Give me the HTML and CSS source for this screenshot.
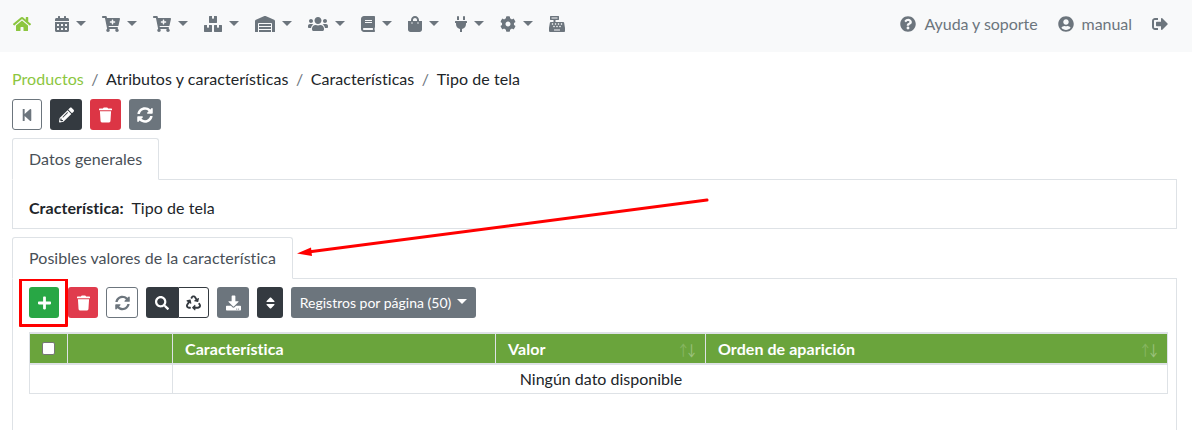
FILE: index.html
```html
<!DOCTYPE html>
<html lang="es">
<head>
<meta charset="utf-8">
<title>Tipo de tela</title>
<link rel="stylesheet" href="styles.css">
</head>
<body>
<svg class="defs" width="0" height="0" aria-hidden="true">
<symbol id="i-plus" viewBox="0 0 448 512"><path d="M416 208H272V64c0-17.67-14.33-32-32-32h-32c-17.67 0-32 14.33-32 32v144H32c-17.67 0-32 14.33-32 32v32c0 17.67 14.33 32 32 32h144v144c0 17.67 14.33 32 32 32h32c17.67 0 32-14.33 32-32V304h144c17.67 0 32-14.33 32-32v-32c0-17.67-14.33-32-32-32z"/></symbol>
<symbol id="i-search" viewBox="0 0 512 512"><path d="M505 442.7L405.3 343c-4.5-4.5-10.6-7-17-7H372c27.6-35.3 44-79.7 44-128C416 93.1 322.9 0 208 0S0 93.1 0 208s93.1 208 208 208c48.3 0 92.7-16.4 128-44v16.3c0 6.4 2.5 12.5 7 17l99.7 99.7c9.4 9.4 24.6 9.4 33.9 0l28.3-28.3c9.4-9.4 9.4-24.6.1-34zM208 336c-70.7 0-128-57.2-128-128 0-70.7 57.2-128 128-128 70.7 0 128 57.2 128 128 0 70.7-57.2 128-128 128z"/></symbol>
<symbol id="i-trash" viewBox="0 0 448 512"><path d="M432 32H312l-9.4-18.7A24 24 0 0 0 281.1 0H166.8a23.72 23.72 0 0 0-21.4 13.3L136 32H16A16 16 0 0 0 0 48v32a16 16 0 0 0 16 16h416a16 16 0 0 0 16-16V48a16 16 0 0 0-16-16zM53.2 467a48 48 0 0 0 47.9 45h245.8a48 48 0 0 0 47.9-45L416 128H32z"/></symbol>
<symbol id="i-sort" viewBox="0 0 320 512"><path d="M41 288h238c21.4 0 32.1 25.9 17 41L177 448c-9.4 9.4-24.6 9.4-33.9 0L24 329c-15.1-15.1-4.4-41 17-41zm255-105L177 64c-9.4-9.4-24.6-9.4-33.9 0L24 183c-15.1 15.1-4.4 41 17 41h238c21.4 0 32.1-25.9 17-41z"/></symbol>
<symbol id="i-back" viewBox="0 0 448 512"><path d="M64 468V44c0-6.6 5.4-12 12-12h48c6.6 0 12 5.4 12 12v176.4l195.5-181C352 20.6 384 34.9 384 64v384c0 29.1-32 43.4-52.5 24.5L136 292.7V468c0 6.6-5.4 12-12 12H76c-6.6 0-12-5.4-12-12z"/></symbol>
<symbol id="i-pencil" viewBox="0 0 512 512"><path d="M497.9 142.1l-46.1 46.1c-4.7 4.7-12.3 4.7-17 0l-111-111c-4.7-4.7-4.7-12.3 0-17l46.1-46.1c18.7-18.7 49.1-18.7 67.9 0l60.1 60.1c18.8 18.7 18.8 49.1 0 67.9zM284.2 99.8L21.6 362.4.4 483.9c-2.9 16.4 11.4 30.6 27.8 27.8l121.5-21.3 262.6-262.6c4.7-4.7 4.7-12.3 0-17l-111-111c-4.8-4.7-12.4-4.7-17.1 0zM124.1 339.9c-5.5-5.5-5.5-14.3 0-19.8l154-154c5.5-5.5 14.3-5.5 19.8 0s5.5 14.3 0 19.8l-154 154c-5.5 5.5-14.3 5.5-19.8 0zM88 424h48v36.3l-64.5 11.3-31.1-31.1L51.7 376H88v48z"/></symbol>
<symbol id="i-sync" viewBox="0 0 512 512"><path d="M370.72 133.28C339.458 104.008 298.888 87.962 255.848 88c-77.458.068-144.328 53.178-162.791 126.85-1.344 5.363-6.122 9.15-11.651 9.15H24.103c-7.498 0-13.194-6.807-11.807-14.176C33.933 94.924 134.813 8 256 8c66.448 0 126.791 26.136 171.315 68.685L463.03 40.97C478.149 25.851 504 36.559 504 57.941V192c0 13.255-10.745 24-24 24H345.941c-21.382 0-32.09-25.851-16.971-40.971l41.75-41.749zM32 296h134.059c21.382 0 32.09 25.851 16.971 40.971l-41.75 41.75c31.262 29.273 71.835 45.319 114.876 45.28 77.418-.07 144.315-53.144 162.787-126.849 1.344-5.363 6.122-9.15 11.651-9.15h57.304c7.498 0 13.194 6.807 11.807 14.176C478.067 417.076 377.187 504 256 504c-66.448 0-126.791-26.136-171.315-68.685L48.97 471.03C33.851 486.149 8 475.441 8 454.059V320c0-13.255 10.745-24 24-24z"/></symbol>
<symbol id="i-home" viewBox="0 0 576 512"><path d="M280.37 148.26L96 300.11V464a16 16 0 0 0 16 16l112.06-.29a16 16 0 0 0 15.92-16V368a16 16 0 0 1 16-16h64a16 16 0 0 1 16 16v95.64a16 16 0 0 0 16 16.05L464 480a16 16 0 0 0 16-16V300L295.67 148.26a12.19 12.19 0 0 0-15.3 0zM571.6 251.47L488 182.56V44.05a12 12 0 0 0-12-12h-56a12 12 0 0 0-12 12v72.61L318.47 43a48 48 0 0 0-61 0L4.34 251.47a12 12 0 0 0-1.6 16.9l25.5 31A12 12 0 0 0 45.15 301l235.22-193.74a12.19 12.19 0 0 1 15.3 0L530.9 301a12 12 0 0 0 16.9-1.6l25.5-31a12 12 0 0 0-1.7-16.93z"/></symbol>
<symbol id="i-cart" viewBox="0 0 576 512"><path d="M504.717 320H211.572l6.545 32h268.418c15.401 0 26.816 14.301 23.403 29.319l-5.517 24.276C523.112 414.668 536 433.828 536 456c0 31.202-25.519 56.444-56.824 55.994-29.823-.429-54.35-24.631-55.155-54.447-.44-16.287 6.085-31.049 16.803-41.548H231.176C241.553 426.165 248 440.326 248 456c0 31.813-26.528 57.431-58.67 55.938-28.54-1.325-51.751-24.385-53.251-52.917-1.158-22.034 10.436-41.455 28.051-51.586L93.883 64H24C10.745 64 0 53.255 0 40V24C0 10.745 10.745 0 24 0h102.529c11.401 0 21.228 8.021 23.513 19.19L159.208 64H551.99c15.401 0 26.816 14.301 23.403 29.319l-47.273 208C525.637 312.246 515.923 320 504.717 320zM408 168h-48v-40c0-8.837-7.163-16-16-16h-16c-8.837 0-16 7.163-16 16v40h-48c-8.837 0-16 7.163-16 16v16c0 8.837 7.163 16 16 16h48v40c0 8.837 7.163 16 16 16h16c8.837 0 16-7.163 16-16v-40h48c8.837 0 16-7.163 16-16v-16c0-8.837-7.163-16-16-16z"/></symbol>
<symbol id="i-calendar" viewBox="0 0 448 512"><path d="M0 464c0 26.5 21.5 48 48 48h352c26.5 0 48-21.5 48-48V192H0v272zm320-196c0-6.6 5.4-12 12-12h40c6.6 0 12 5.4 12 12v40c0 6.6-5.4 12-12 12h-40c-6.6 0-12-5.4-12-12v-40zm0 128c0-6.6 5.4-12 12-12h40c6.6 0 12 5.4 12 12v40c0 6.6-5.4 12-12 12h-40c-6.6 0-12-5.4-12-12v-40zM192 268c0-6.6 5.4-12 12-12h40c6.6 0 12 5.4 12 12v40c0 6.6-5.4 12-12 12h-40c-6.6 0-12-5.4-12-12v-40zm0 128c0-6.6 5.4-12 12-12h40c6.6 0 12 5.4 12 12v40c0 6.6-5.4 12-12 12h-40c-6.6 0-12-5.4-12-12v-40zM64 268c0-6.6 5.4-12 12-12h40c6.6 0 12 5.4 12 12v40c0 6.6-5.4 12-12 12H76c-6.6 0-12-5.4-12-12v-40zm0 128c0-6.6 5.4-12 12-12h40c6.6 0 12 5.4 12 12v40c0 6.6-5.4 12-12 12H76c-6.6 0-12-5.4-12-12v-40zM400 64h-48V16c0-8.8-7.2-16-16-16h-32c-8.8 0-16 7.2-16 16v48H160V16c0-8.8-7.2-16-16-16h-32c-8.8 0-16 7.2-16 16v48H48C21.5 64 0 85.5 0 112v48h448v-48c0-26.5-21.5-48-48-48z"/></symbol>
<symbol id="i-boxes" viewBox="0 0 576 512"><path d="M560 288h-80v96l-32-21.3-32 21.3v-96h-80c-8.8 0-16 7.2-16 16v192c0 8.8 7.2 16 16 16h224c8.8 0 16-7.2 16-16V304c0-8.8-7.2-16-16-16zm-384-64h224c8.8 0 16-7.2 16-16V16c0-8.8-7.2-16-16-16h-80v96l-32-21.3L256 96V0h-80c-8.8 0-16 7.2-16 16v192c0 8.8 7.2 16 16 16zm64 64h-80v96l-32-21.3L96 384v-96H16c-8.8 0-16 7.2-16 16v192c0 8.8 7.2 16 16 16h224c8.8 0 16-7.2 16-16V304c0-8.8-7.2-16-16-16z"/></symbol>
<symbol id="i-warehouse" viewBox="0 0 640 512"><path d="M504 352H136.4c-4.4 0-8 3.6-8 8l-.1 48c0 4.4 3.6 8 8 8H504c4.4 0 8-3.6 8-8v-48c0-4.4-3.6-8-8-8zm0 96H136.1c-4.4 0-8 3.6-8 8l-.1 48c0 4.4 3.6 8 8 8h368c4.4 0 8-3.6 8-8v-48c0-4.4-3.6-8-8-8zm0-192H136.6c-4.4 0-8 3.6-8 8l-.1 48c0 4.4 3.6 8 8 8H504c4.4 0 8-3.6 8-8v-48c0-4.4-3.6-8-8-8zm106.5-139L338.4 3.7a48.15 48.15 0 0 0-36.9 0L29.5 117C11.7 124.5 0 141.9 0 161.3V504c0 4.4 3.6 8 8 8h80c4.4 0 8-3.6 8-8V256c0-17.6 14.6-32 32.6-32h382.8c18 0 32.6 14.4 32.6 32v248c0 4.4 3.6 8 8 8h80c4.4 0 8-3.6 8-8V161.3c0-19.4-11.7-36.8-29.5-44.3z"/></symbol>
<symbol id="i-users" viewBox="0 0 640 512"><path d="M96 224c35.3 0 64-28.7 64-64s-28.7-64-64-64-64 28.7-64 64 28.7 64 64 64zm448 0c35.3 0 64-28.7 64-64s-28.7-64-64-64-64 28.7-64 64 28.7 64 64 64zm32 32h-64c-17.6 0-33.5 7.1-45.1 18.6 40.3 22.1 68.9 62 75.1 109.4h66c17.7 0 32-14.3 32-32v-32c0-35.3-28.7-64-64-64zm-256 0c61.9 0 112-50.1 112-112S381.9 32 320 32 208 82.1 208 144s50.1 112 112 112zm76.8 32h-8.3c-20.8 10-43.9 16-68.5 16s-47.6-6-68.5-16h-8.3C179.6 288 128 339.6 128 403.2V432c0 26.5 21.5 48 48 48h288c26.5 0 48-21.5 48-48v-28.8c0-63.6-51.6-115.2-115.2-115.2zm-223.7-13.4C161.5 263.1 145.6 256 128 256H64c-35.3 0-64 28.7-64 64v32c0 17.7 14.3 32 32 32h65.9c6.3-47.4 34.9-87.3 75.2-109.4z"/></symbol>
<symbol id="i-book" viewBox="0 0 448 512"><path d="M448 360V24c0-13.3-10.7-24-24-24H96C43 0 0 43 0 96v320c0 53 43 96 96 96h328c13.3 0 24-10.7 24-24v-16c0-7.5-3.5-14.3-8.9-18.7-4.2-15.4-4.2-59.3 0-74.7 5.4-4.3 8.9-11.1 8.9-18.6zM128 134c0-3.3 2.7-6 6-6h212c3.3 0 6 2.7 6 6v20c0 3.3-2.7 6-6 6H134c-3.3 0-6-2.7-6-6v-20zm0 64c0-3.3 2.7-6 6-6h212c3.3 0 6 2.7 6 6v20c0 3.3-2.7 6-6 6H134c-3.3 0-6-2.7-6-6v-20zm253.4 250H96c-17.7 0-32-14.3-32-32 0-17.6 14.4-32 32-32h285.4c-1.9 17.1-1.9 46.9 0 64z"/></symbol>
<symbol id="i-bag" viewBox="0 0 448 512"><path d="M352 160v-32C352 57.42 294.579 0 224 0 153.42 0 96 57.42 96 128v32H0v272c0 44.183 35.817 80 80 80h288c44.183 0 80-35.817 80-80V160h-96zm-192-32c0-35.29 28.71-64 64-64s64 28.71 64 64v32H160v-32zm160 120c-13.255 0-24-10.745-24-24s10.745-24 24-24 24 10.745 24 24-10.745 24-24 24zm-192 0c-13.255 0-24-10.745-24-24s10.745-24 24-24 24 10.745 24 24-10.745 24-24 24z"/></symbol>
<symbol id="i-plug" viewBox="0 0 384 512"><path d="M320,32a32,32,0,0,0-64,0v96h64Zm48,128H16A16,16,0,0,0,0,176v32a16,16,0,0,0,16,16H32v32A160.07,160.07,0,0,0,160,412.8V512h64V412.8A160.07,160.07,0,0,0,352,256V224h16a16,16,0,0,0,16-16V176A16,16,0,0,0,368,160ZM128,32a32,32,0,0,0-64,0v96h64Z"/></symbol>
<symbol id="i-cog" viewBox="0 0 512 512"><path d="M487.4 315.7l-42.6-24.6c4.3-23.2 4.3-47 0-70.2l42.6-24.6c4.9-2.8 7.1-8.6 5.5-14-11.1-35.6-30-67.8-54.7-94.6-3.8-4.1-10-5.1-14.8-2.3L380.8 110c-17.9-15.4-38.5-27.3-60.8-35.1V25.8c0-5.6-3.9-10.5-9.4-11.7-36.7-8.2-74.3-7.8-109.2 0-5.5 1.2-9.4 6.1-9.4 11.7V75c-22.2 7.9-42.8 19.8-60.8 35.1L88.7 85.5c-4.9-2.8-11-1.9-14.8 2.3-24.7 26.7-43.6 58.9-54.7 94.6-1.7 5.4.6 11.2 5.5 14L67.3 221c-4.3 23.2-4.3 47 0 70.2l-42.6 24.6c-4.9 2.8-7.1 8.6-5.5 14 11.1 35.6 30 67.8 54.7 94.6 3.8 4.1 10 5.1 14.8 2.3l42.6-24.6c17.9 15.4 38.5 27.3 60.8 35.1v49.2c0 5.6 3.9 10.5 9.4 11.7 36.7 8.2 74.3 7.8 109.2 0 5.5-1.2 9.4-6.1 9.4-11.7v-49.2c22.2-7.9 42.8-19.8 60.8-35.1l42.6 24.6c4.9 2.8 11 1.9 14.8-2.3 24.7-26.7 43.6-58.9 54.7-94.6 1.5-5.5-.7-11.3-5.6-14.1zM256 336c-44.1 0-80-35.9-80-80s35.9-80 80-80 80 35.9 80 80-35.9 80-80 80z"/></symbol>
<symbol id="i-cash" viewBox="0 0 512 512"><path d="M511.1 378.8l-26.7-160c-2.6-15.4-15.9-26.7-31.6-26.7H208v-64h96c8.8 0 16-7.2 16-16V16c0-8.8-7.2-16-16-16H48c-8.8 0-16 7.2-16 16v96c0 8.8 7.2 16 16 16h96v64H59.1c-15.6 0-29 11.3-31.6 26.7L.8 378.7c-.6 3.5-.9 7-.9 10.5V480c0 17.7 14.3 32 32 32h448c17.7 0 32-14.3 32-32v-90.7c.1-3.5-.2-7-.8-10.5zM280 248c0-8.8 7.2-16 16-16h16c8.8 0 16 7.2 16 16v16c0 8.8-7.2 16-16 16h-16c-8.8 0-16-7.2-16-16v-16zm-32 64h16c8.8 0 16 7.2 16 16v16c0 8.8-7.2 16-16 16h-16c-8.8 0-16-7.2-16-16v-16c0-8.8 7.2-16 16-16zm-32-80c8.8 0 16 7.2 16 16v16c0 8.8-7.2 16-16 16h-16c-8.8 0-16-7.2-16-16v-16c0-8.8 7.2-16 16-16h16zM80 80V48h192v32H80zm40 200h-16c-8.8 0-16-7.2-16-16v-16c0-8.8 7.2-16 16-16h16c8.8 0 16 7.2 16 16v16c0 8.8-7.2 16-16 16zm16 64v-16c0-8.8 7.2-16 16-16h16c8.8 0 16 7.2 16 16v16c0 8.8-7.2 16-16 16h-16c-8.8 0-16-7.2-16-16zm216 112c0 4.4-3.6 8-8 8H168c-4.4 0-8-3.6-8-8v-16c0-4.4 3.6-8 8-8h176c4.4 0 8 3.6 8 8v16zm24-112c0 8.8-7.2 16-16 16h-16c-8.8 0-16-7.2-16-16v-16c0-8.8 7.2-16 16-16h16c8.8 0 16 7.2 16 16v16zm48-80c0 8.8-7.2 16-16 16h-16c-8.8 0-16-7.2-16-16v-16c0-8.8 7.2-16 16-16h16c8.8 0 16 7.2 16 16v16z"/></symbol>
<symbol id="i-question" viewBox="0 0 512 512"><path d="M504 256c0 136.997-111.043 248-248 248S8 392.997 8 256C8 119.083 119.043 8 256 8s248 111.083 248 248zM262.655 90c-54.497 0-89.255 22.957-116.549 63.758-3.536 5.286-2.353 12.415 2.715 16.258l34.699 26.31c5.205 3.947 12.621 3.008 16.665-2.122 17.864-22.658 30.113-35.797 57.303-35.797 20.429 0 45.698 13.148 45.698 32.958 0 14.976-12.363 22.667-32.534 33.976C247.128 238.528 216 254.941 216 296v4c0 6.627 5.373 12 12 12h56c6.627 0 12-5.373 12-12v-1.333c0-28.462 83.186-29.647 83.186-106.667 0-58.002-60.165-102-116.531-102zM256 338c-25.365 0-46 20.635-46 46 0 25.364 20.635 46 46 46s46-20.636 46-46c0-25.365-20.635-46-46-46z"/></symbol>
<symbol id="i-user" viewBox="0 0 496 512"><path d="M248 8C111 8 0 119 0 256s111 248 248 248 248-111 248-248S385 8 248 8zm0 96c48.6 0 88 39.4 88 88s-39.4 88-88 88-88-39.4-88-88 39.4-88 88-88zm0 344c-58.7 0-111.3-26.6-146.5-68.2 18.8-35.4 55.6-59.8 98.5-59.8 2.4 0 4.8.4 7.1 1.1 13 4.2 26.6 6.9 40.9 6.9 14.3 0 28-2.7 40.9-6.9 2.3-.7 4.7-1.1 7.1-1.1 42.9 0 79.7 24.4 98.5 59.8C359.3 421.4 306.7 448 248 448z"/></symbol>
<symbol id="i-signout" viewBox="0 0 512 512"><path d="M497 273L329 441c-15 15-41 4.5-41-17v-96H152c-13.3 0-24-10.7-24-24v-96c0-13.3 10.7-24 24-24h136V88c0-21.4 25.9-32 41-17l168 168c9.3 9.4 9.3 24.6 0 34zM192 436v-40c0-6.6-5.4-12-12-12H96c-17.7 0-32-14.3-32-32V160c0-17.7 14.3-32 32-32h84c6.6 0 12-5.4 12-12V76c0-6.6-5.4-12-12-12H96c-53 0-96 43-96 96v192c0 53 43 96 96 96h84c6.6 0 12-5.4 12-12z"/></symbol>
<symbol id="i-recycle" viewBox="0 0 512 512"><path d="M184.561 261.903c3.232 13.997-12.123 24.635-24.068 17.168l-40.736-25.455-50.867 81.402C55.606 356.273 70.96 384 96.012 384H148c8.837 0 16 7.163 16 16v32c0 8.837-7.163 16-16 16H96.115c-75.334 0-121.302-83.048-81.408-146.88l50.822-81.388-40.725-25.448c-12.081-7.547-8.966-25.961 4.879-29.158l110.237-25.45c8.611-1.988 17.201 3.381 19.189 11.99l25.452 110.237zm98.561-182.915l41.289 66.076-40.74 25.457c-12.051 7.528-9 25.953 4.879 29.158l110.237 25.45c8.672 1.999 17.215-3.438 19.189-11.99l25.45-110.237c3.197-13.844-11.99-24.719-24.068-17.168l-40.687 25.424-41.263-66.082c-37.521-60.033-125.209-60.171-162.816 0l-17.963 28.766c-4.667 7.49-2.372 17.357 5.134 22.042l27.117 16.954c7.498 4.686 17.367 2.405 22.053-5.09l17.97-28.743c12.434-19.883 41.464-20.04 54.214-.617zM497.288 301.12l-27.603-44.192c-4.671-7.475-14.524-9.748-21.999-5.077l-27.135 16.954c-7.494 4.682-9.771 14.553-5.09 22.047l27.661 44.28c13.352 21.341-2.017 48.867-27.19 48.867H320v-48c0-14.214-17.249-21.378-27.313-11.313l-80 80c-6.249 6.248-6.249 16.379 0 22.627l80 80C302.749 516.375 320 509.212 320 495.999V448h95.962c75.26 0 121.244-82.926 81.326-146.88z"/></symbol>
<symbol id="i-download" viewBox="0 0 512 512"><path d="M216 0h80c13.3 0 24 10.7 24 24v168h87.7c17.8 0 26.7 21.5 14.1 34.1L269.7 378.3c-7.5 7.5-19.8 7.5-27.3 0L90.1 226.1c-12.6-12.6-3.7-34.1 14.1-34.1H192V24c0-13.3 10.7-24 24-24zm296 376v112c0 13.3-10.7 24-24 24H24c-13.3 0-24-10.7-24-24V376c0-13.3 10.7-24 24-24h146.7l49 49c20.1 20.1 52.5 20.1 72.6 0l49-49H488c13.3 0 24 10.7 24 24zm-124 88c0-11-9-20-20-20s-20 9-20 20 9 20 20 20 20-9 20-20zm64 0c0-11-9-20-20-20s-20 9-20 20 9 20 20 20 20-9 20-20z"/></symbol>
</svg>

<nav class="navbar">
  <div class="nav-left">
    <a class="nav-item nav-home"><svg class="icon w18 green"><use href="#i-home"/></svg></a>
    <a class="nav-item"><svg class="icon w14"><use href="#i-calendar"/></svg><span class="caret"></span></a>
    <a class="nav-item"><svg class="icon w18"><use href="#i-cart"/></svg><span class="caret"></span></a>
    <a class="nav-item"><svg class="icon w18"><use href="#i-cart"/></svg><span class="caret"></span></a>
    <a class="nav-item"><svg class="icon w18"><use href="#i-boxes"/></svg><span class="caret"></span></a>
    <a class="nav-item"><svg class="icon w20"><use href="#i-warehouse"/></svg><span class="caret"></span></a>
    <a class="nav-item"><svg class="icon w20"><use href="#i-users"/></svg><span class="caret"></span></a>
    <a class="nav-item"><svg class="icon w14"><use href="#i-book"/></svg><span class="caret"></span></a>
    <a class="nav-item"><svg class="icon w14"><use href="#i-bag"/></svg><span class="caret"></span></a>
    <a class="nav-item"><svg class="icon w12"><use href="#i-plug"/></svg><span class="caret"></span></a>
    <a class="nav-item"><svg class="icon w16"><use href="#i-cog"/></svg><span class="caret"></span></a>
    <a class="nav-item"><svg class="icon w16"><use href="#i-cash"/></svg></a>
  </div>
  <div class="nav-right">
    <a class="nav-text"><svg class="icon w16"><use href="#i-question"/></svg><span class="nav-label">Ayuda y soporte</span></a>
    <a class="nav-text"><svg class="icon w16"><use href="#i-user"/></svg><span class="nav-label">manual</span></a>
    <a class="nav-text"><svg class="icon w16"><use href="#i-signout"/></svg></a>
  </div>
</nav>

<main class="page">
  <ol class="breadcrumb">
    <li class="crumb crumb-link">Productos</li>
    <li class="crumb">Atributos y características</li>
    <li class="crumb">Características</li>
    <li class="crumb">Tipo de tela</li>
  </ol>

  <div class="toolbar toolbar-top">
    <button class="btn btn-outline w30"><svg class="icon w12"><use href="#i-back"/></svg></button>
    <button class="btn btn-dark"><svg class="icon w15"><use href="#i-pencil"/></svg></button>
    <button class="btn btn-danger w31"><svg class="icon w13"><use href="#i-trash"/></svg></button>
    <button class="btn btn-secondary"><svg class="icon w16"><use href="#i-sync"/></svg></button>
  </div>

  <div class="tab">Datos generales</div>
  <section class="panel panel-info">
    <strong>Cracterística:</strong>&nbsp; Tipo de tela
  </section>

  <div class="tab tab-second">Posibles valores de la característica</div>
  <section class="panel panel-values">
    <div class="toolbar toolbar-table">
      <div class="pair">
        <button class="btn btn-success w30"><svg class="icon w13"><use href="#i-plus"/></svg></button>
        <button class="btn btn-danger-soft w30"><svg class="icon w13"><use href="#i-trash"/></svg></button>
      </div>
      <button class="btn btn-outline"><svg class="icon w15 dark-grey"><use href="#i-sync"/></svg></button>
      <div class="group">
        <button class="btn btn-dark group-start"><svg class="icon w14"><use href="#i-search"/></svg></button>
        <button class="btn btn-outline-dark group-end"><svg class="icon w15"><use href="#i-recycle"/></svg></button>
      </div>
      <button class="btn btn-secondary"><svg class="icon w15"><use href="#i-download"/></svg></button>
      <button class="btn btn-dark w26"><svg class="icon w9"><use href="#i-sort"/></svg></button>
      <button class="btn btn-secondary btn-text">Registros por página (50)<span class="caret caret-white"></span></button>
    </div>

    <table class="grid">
      <colgroup>
        <col class="c1"><col class="c2"><col class="c3"><col class="c4"><col>
      </colgroup>
      <thead>
        <tr>
          <th class="th-check"><span class="checkbox"></span></th>
          <th></th>
          <th>Característica</th>
          <th class="sortable">Valor<span class="arrows"><i class="up">↑</i><i class="down">↓</i></span></th>
          <th class="sortable">Orden de aparición<span class="arrows"><i class="up">↑</i><i class="down">↓</i></span></th>
        </tr>
      </thead>
      <tbody>
        <tr>
          <td colspan="2"></td>
          <td colspan="3" class="empty"><span class="empty-text">Ningún dato disponible</span></td>
        </tr>
      </tbody>
    </table>
  </section>
</main>

<div class="annot-box"></div>
<svg class="annot-arrow" width="1192" height="430" viewBox="0 0 1192 430" aria-hidden="true">
  <path class="arrow-line" d="M707 200L308 252"/>
  <path class="arrow-head" d="M297 253.500L311 247.500L312 256z"/>
</svg>
</body>
</html>
```
FILE: styles.css
```css
* { box-sizing: border-box; }
html, body { margin: 0; height: 430px; overflow: hidden; }
body {
  position: relative;
  display: flex;
  flex-direction: column;
  font-family: "Lato", "Liberation Sans", sans-serif;
  font-size: 16px;
  line-height: 24px;
  color: #212529;
  background: #fff;
}
.defs { position: absolute; }
.icon { display: block; height: 16px; fill: currentColor; flex: none; }
.w9 { width: 9px; }
.w12 { width: 12px; }
.w13 { width: 13px; }
.w14 { width: 14px; }
.w15 { width: 15px; }
.w16 { width: 16px; }
.w18 { width: 18px; }
.w20 { width: 20px; }
.green { color: #8cc63f; }
.dark-grey { color: #6c757d; }

.navbar {
  flex: none;
  height: 52px;
  background: #f8f9fa;
  display: flex;
  justify-content: space-between;
  align-items: center;
  padding: 0 24px 4px 13px;
  color: #6c757d;
}
.nav-left, .nav-right { display: flex; align-items: center; }
.nav-left { gap: 16px; }
.nav-right { gap: 20px; }
.nav-item { display: flex; align-items: center; gap: 7px; }
.nav-home { margin-right: 8px; }
.caret {
  width: 0;
  height: 0;
  margin-bottom: 2px;
  border-left: 5px solid transparent;
  border-right: 5px solid transparent;
  border-top: 5px solid currentColor;
}
.caret-white { color: #fff; margin-left: 6px; }
.nav-text { display: flex; align-items: center; gap: 8px; }
.nav-label { letter-spacing: -.05px; }

.page {
  flex: 1;
  min-height: 0;
  display: flex;
  flex-direction: column;
  padding: 15px 15px 0 12px;
  letter-spacing: .06px;
}
.page > * { flex: none; }

.breadcrumb { list-style: none; margin: 0; padding: 0; display: flex; height: 24px; }
.crumb + .crumb::before { content: "/"; color: #6c757d; padding: 0 7.5px; }
.crumb-link { color: #8cc63f; }

.toolbar { display: flex; gap: 8px; }
.toolbar-top { margin-top: 8px; }
.toolbar-table { margin: 8px 0 0 16px; }
.pair { display: flex; gap: 9px; }
.group { display: flex; }

.btn {
  height: 31px;
  width: 32px;
  padding: 0;
  border: 1px solid transparent;
  border-radius: 3px;
  display: flex;
  align-items: center;
  justify-content: center;
  font: inherit;
  color: #fff;
}
.w26 { width: 26px; }
.w30 { width: 30px; }
.w31 { width: 31px; }
.btn-outline { background: #fff; border-color: #6c757d; color: #6c757d; }
.btn-dark { background: #343a40; }
.btn-danger { background: #dc3545; }
.btn-danger-soft { background: #e03b4d; }
.btn-secondary { background: #6c757d; }
.btn-success { background: #28a745; }
.btn-outline-dark { background: #fff; border-color: #343a40; color: #343a40; }
.group-start { border-radius: 3px 0 0 3px; }
.group-end { border-radius: 0 3px 3px 0; width: 31px; }
.btn-text { width: 185px; font-size: 14px; }

.tab {
  align-self: flex-start;
  position: relative;
  z-index: 1;
  height: 42px;
  margin-top: 8px;
  margin-bottom: -1px;
  padding: 8px 16px 0;
  border: 1px solid #dee2e6;
  border-bottom-color: #fff;
  border-radius: 3px 3px 0 0;
  color: #495057;
  background: #fff;
}
.panel { border: 1px solid #dee2e6; }
.panel-info { height: 50px; padding: 16px 16px 0; }
.panel-values { height: 170px; }

.grid {
  border-collapse: collapse;
  table-layout: fixed;
  width: 1139px;
  margin: 14px 0 0 16px;
}
.c1 { width: 38px; }
.c2 { width: 105px; }
.c3 { width: 323px; }
.c4 { width: 210px; }
.grid th {
  height: 31px;
  padding: 0 12px;
  text-align: left;
  font-weight: 700;
  background: #6aa43c;
  color: #fff;
  border: 1px solid #dee2e6;
  border-width: 2px 1px;
  position: relative;
}
.grid th + th { border-left-color: #e8f0e0; }
.grid td { height: 29px; border: 1px solid #dee2e6; padding: 0; }
.grid .th-check { padding: 0; }
.checkbox {
  display: block;
  width: 13px;
  height: 13px;
  margin: 0 auto;
  background: #fff;
  border: 1px solid #767676;
  border-radius: 2px;
}
.empty { text-align: center; letter-spacing: 0; }
.empty-text { position: relative; left: -69px; }
.arrows {
  position: absolute;
  right: 9px;
  top: 3px;
  font-weight: 400;
  font-size: 15px;
  display: flex;
  transform: scaleX(.72);
  transform-origin: right center;
}
.arrows i { font-style: normal; }
.arrows .up { opacity: .2; }
.arrows .down { opacity: .35; }

.annot-box {
  position: absolute;
  left: 19px;
  top: 278px;
  width: 49px;
  height: 49px;
  border: 3px solid #f00;
  border-radius: 1px;
}
.annot-arrow { position: absolute; left: 0; top: 0; pointer-events: none; }
.arrow-line { stroke: #f00; stroke-width: 3; fill: none; stroke-linecap: round; }
.arrow-head { fill: #f00; }
```
